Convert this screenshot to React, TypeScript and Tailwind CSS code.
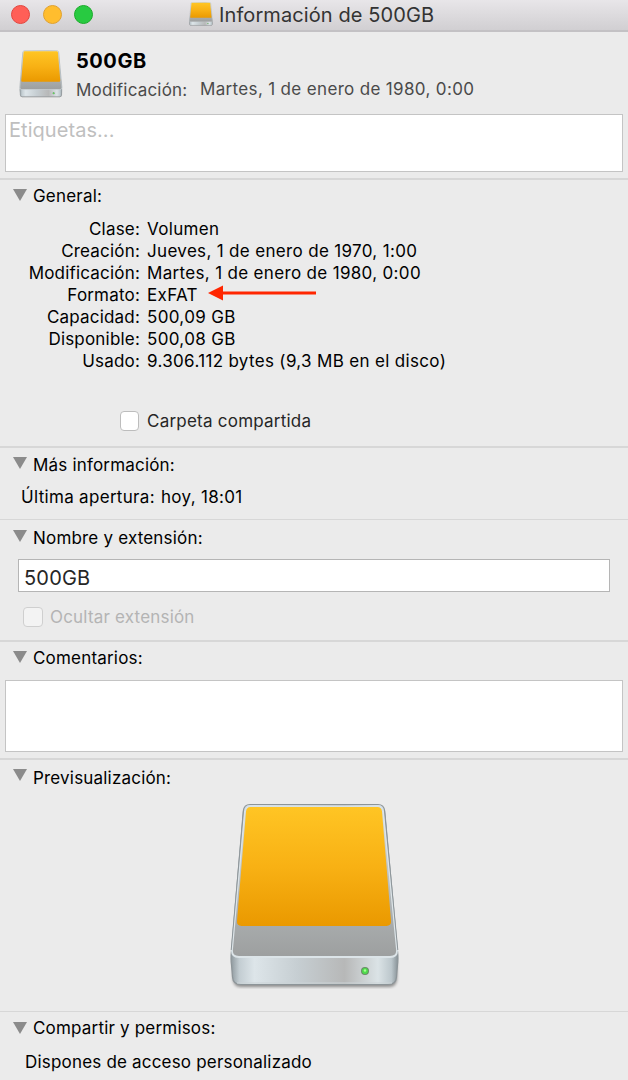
import type { ReactNode } from "react";
import clsx from "clsx";

interface SectionProps {
  title: string;
  className: string;
  titleClass: string;
  arrowClass: string;
  children?: ReactNode;
}

const details = [
  { label: "Clase:", value: "Volumen" },
  { label: "Creación:", value: "Jueves, 1 de enero de 1970, 1:00" },
  { label: "Modificación:", value: "Martes, 1 de enero de 1980, 0:00" },
  { label: "Formato:", value: "ExFAT", arrow: true },
  { label: "Capacidad:", value: "500,09 GB" },
  { label: "Disponible:", value: "500,08 GB" },
  { label: "Usado:", value: "9.306.112 bytes (9,3 MB en el disco)" },
];

const DriveIcon = ({ id, className }: { id: string; className: string }) => (
  <svg viewBox="0 0 174 188" preserveAspectRatio="none" className={className}>
    <defs>
      <linearGradient id={`${id}-label`} x1="0" y1="0" x2="0" y2="1">
        <stop offset="0" stopColor="#ffc524" />
        <stop offset="0.5" stopColor="#f8b114" />
        <stop offset="1" stopColor="#ea9900" />
      </linearGradient>
      <linearGradient id={`${id}-top`} x1="0" y1="0" x2="0" y2="1">
        <stop offset="0" stopColor="#d8e2e8" />
        <stop offset="0.75" stopColor="#a9adae" />
        <stop offset="1" stopColor="#9d9f9f" />
      </linearGradient>
      <linearGradient id={`${id}-front`} x1="0" y1="0" x2="1" y2="0">
        <stop offset="0" stopColor="#8f999e" />
        <stop offset="0.05" stopColor="#c3cdd2" />
        <stop offset="0.14" stopColor="#dde5e9" />
        <stop offset="0.4" stopColor="#c6ced2" />
        <stop offset="0.68" stopColor="#b7b8b8" />
        <stop offset="0.88" stopColor="#dbe3e6" />
        <stop offset="0.96" stopColor="#bcc7cc" />
        <stop offset="1" stopColor="#879196" />
      </linearGradient>
      <filter id={`${id}-shadow`} x="-5%" y="-5%" width="110%" height="112%">
        <feGaussianBlur stdDeviation="1.6" />
      </filter>
    </defs>
    <path d="M5 160 L5 176 Q5 185 13 185 H161 Q169 185 169 176 V160Z" fill="#000" opacity="0.4" filter={`url(#${id}-shadow)`} />
    <path
      d="M22 2.5 H150 Q156 2.5 156.7 9 L169.5 149 Q170.5 157 169.5 163 L168.5 175 Q168 182.5 160 182.5 H13 Q5 182.5 4.500 175 L3.5 163 Q2.5 157 3.5 149 L15.3 9 Q16 2.5 22 2.5Z"
      fill={`url(#${id}-front)`}
      stroke="#8d9599"
      strokeWidth="1.2"
    />
    <path d="M22 3.5 H150 Q155 3.5 155.5 9 L169 148 Q169.5 155 162 155 H11 Q3.5 155 4 148 L16.5 9 Q17 3.5 22 3.5Z" fill={`url(#${id}-top)`} />
    <path d="M16.5 9 L4 148 Q3.5 155 11 155 H162 Q169.5 155 169 148 L155.5 9" fill="none" stroke="#dce4e8" strokeWidth="1.8" />
    <path d="M15.5 9 L3.2 148 M156.5 9 L169.8 148" stroke="#8d9599" strokeWidth="1" />
    <path d="M22.5 5 H149.5 Q153.5 5 154 9.5 L163 119 Q163.5 124 158.5 124 H13.5 Q8.5 124 9 119 L18 9.5 Q18.5 5 22.5 5Z" fill={`url(#${id}-label)`} />
    <path d="M9 181 H164" stroke="#cbd3d6" strokeWidth="1" />
    <circle cx="137" cy="169" r="4" fill="#698c67" />
    <circle cx="137" cy="169" r="2.9" fill="#4fdd4b" />
    <circle cx="137" cy="168.5" r="1.2" fill="#a5ff91" />
  </svg>
);

const Triangle = ({ className }: { className: string }) => (
  <svg viewBox="0 0 14 12" className={clsx("ml-[13px] h-3 w-3.5 shrink-0", className)}>
    <path d="M0 0H14L7 12Z" fill="#8b8b8b" />
  </svg>
);

const Section = ({ title, className, titleClass, arrowClass, children }: SectionProps) => (
  <section className={clsx("shrink-0 border-[#d7d7d7]", className)}>
    <h2 className="flex h-8 items-start">
      <Triangle className={arrowClass} />
      <span className={clsx("ml-1.5 leading-[22px]", titleClass)}>{title}</span>
    </h2>
    {children}
  </section>
);

const RedArrow = () => (
  <svg viewBox="0 0 110 16" className="-mt-1 ml-2.5 h-4 w-[110px]">
    <path d="M14 6.5H108V9.5H14Z" fill="#ff2600" />
    <path d="M0 8L15 0.5V15.5Z" fill="#ff2600" />
  </svg>
);

export default function App() {
  return (
    <main className="flex h-[1080px] w-[628px] flex-col overflow-hidden bg-[#ebebeb] font-['Inter',sans-serif] text-[17px] tracking-[0.19px] whitespace-nowrap text-black">
      <header className="flex h-8 shrink-0 items-start border-b-2 border-[#c3c1c4] bg-linear-to-b from-[#e8e6e9] to-[#d1cfd2]">
        <div className="mt-[5px] ml-[11px] flex gap-[12.5px]">
          <span className="size-[19px] rounded-full border border-[#e2463f] bg-[#ff5f57]" />
          <span className="size-[19px] rounded-full border border-[#e0a12f] bg-[#ffbd2e]" />
          <span className="size-[19px] rounded-full border border-[#1aab29] bg-[#28ca41]" />
        </div>
        <DriveIcon id="title" className="mt-0.5 ml-[96px] h-6 w-6" />
        <h1 className="mt-[3px] ml-[6px] text-[20px] leading-6 tracking-[0.1px] text-[#333]">Información de 500GB</h1>
      </header>

      <div className="flex h-[82px] shrink-0">
        <DriveIcon id="head" className="mt-[18px] ml-[19px] h-[48px] w-11" />
        <div className="ml-[13px] pt-[17px]">
          <p className="text-[20px] leading-6 font-bold tracking-[0.55px]">500GB</p>
          <p className="mt-[5px] flex leading-[22px] text-[#4a4a4a]">
            <span className="mt-px w-[124px]">Modificación:</span>
            <span className="tracking-[0.34px]">Martes, 1 de enero de 1980, 0:00</span>
          </p>
        </div>
      </div>
      <div className="mx-[5px] mb-1.5 h-[58px] shrink-0 border-[1.5px] border-[#c4c4c4] bg-white pt-[3px] pl-[3px] text-[20px] leading-6 tracking-[0.05px] text-[#bfbfbf]">
        Etiquetas...
      </div>

      <Section title="General:" className="h-[268px] border-t-2" arrowClass="mt-[9px]" titleClass="mt-[5px]">
        <dl className="mt-1.5">
          {details.map((row) => (
            <div key={row.label} className="flex h-[22px] items-center leading-[22px]">
              <dt className="w-[140px] text-right">{row.label}</dt>
              <dd className="ml-[7px] flex items-center tracking-[0.33px]">
                {row.value}
                {row.arrow && <RedArrow />}
              </dd>
            </div>
          ))}
        </dl>
        <label className="mt-[38px] ml-[120px] flex items-center leading-[22px] tracking-[0.23px] text-[#262626]">
          <span className="mr-2 h-5 w-[19px] rounded-[4px] border border-[#bdbdbd] bg-white" />
          Carpeta compartida
        </label>
      </Section>

      <Section title="Más información:" className="h-[73px] border-t-2" arrowClass="mt-[9px]" titleClass="mt-1.5">
        <p className="mt-1.5 ml-[21px] flex leading-[22px] tracking-[0.31px]">
          <span className="w-[140px]">Última apertura:</span>
          <span>hoy, 18:01</span>
        </p>
      </Section>

      <Section title="Nombre y extensión:" className="h-[121px] border-t" arrowClass="mt-[10px]" titleClass="mt-[7px]">
        <div className="mt-[7px] ml-[18px] h-[33px] w-[592px] border border-[#b5b5b5] bg-white pt-1.5 pl-[5px] text-[20px] leading-6 text-[#262626]">
          500GB
        </div>
        <label className="mt-[14px] ml-[23px] flex items-center leading-[22px] text-[#b4b4b4]">
          <span className="mr-[7px] size-5 rounded-[4px] border border-[#cfcfcf] bg-[#f3f3f3]" />
          Ocultar extensión
        </label>
      </Section>

      <Section title="Comentarios:" className="h-[118px] border-t-2" arrowClass="mt-[9px]" titleClass="mt-[5px]">
        <div className="mx-[5px] mt-1.5 h-[72px] border-[1.5px] border-[#c4c4c4] bg-white" />
      </Section>

      <Section title="Previsualización:" className="h-[253px] border-t-2" arrowClass="mt-[9px]" titleClass="mt-[7px]">
        <DriveIcon id="preview" className="mt-[10px] ml-[228px] h-[188px] w-[174px]" />
      </Section>

      <Section title="Compartir y permisos:" className="h-[69px] border-t" arrowClass="mt-[10px]" titleClass="mt-[5px]">
        <p className="mt-[7px] ml-[25px] leading-[22px]">Dispones de acceso personalizado</p>
      </Section>
    </main>
  );
}
